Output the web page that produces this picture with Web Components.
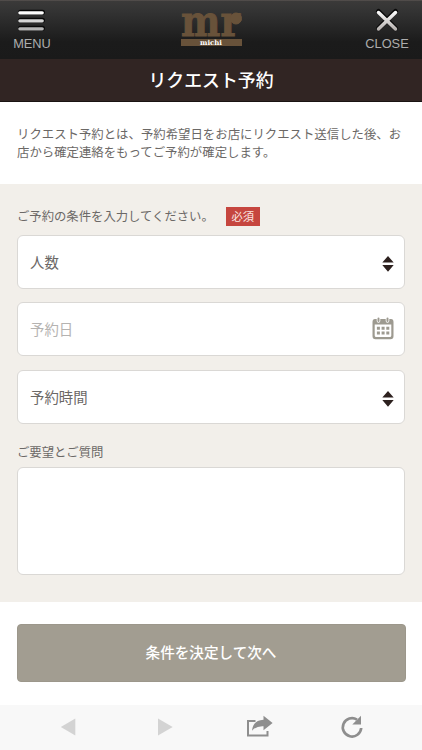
<!DOCTYPE html>
<html lang="ja">
<head>
<meta charset="utf-8">
<title>リクエスト予約</title>
<style>
body{margin:0;background:#fff;color:#6b6866;font-family:"Noto Sans CJK JP",sans-serif}
</style>
</head>
<body>
<reserve-page></reserve-page>
<script>
const define = (name, html) => customElements.define(name, class extends HTMLElement {
  constructor() {
    super();
    const t = document.createElement('template');
    t.innerHTML = html;
    this.attachShadow({mode: 'open'}).append(t.content.cloneNode(true));
  }
});

define('app-header', `
<style>
:host{display:flex;justify-content:space-between;height:59px;box-sizing:border-box;background:linear-gradient(#655d5a 0,#3b3a39 1px,#343434 10px,#1b1b1b 42px,#1a1a1a);color:#adadad;font:12.800px/16px "Liberation Sans",sans-serif}
.item{display:flex;flex-direction:column;align-items:center;width:64px;padding-top:7px}
.item:last-child{width:70px}
svg{display:block}
.item svg{margin-bottom:2px}
.logo{margin-left:6px}
</style>
<div class="item">
 <svg width="30" height="27" viewBox="0 0 30 27"><g stroke="#090909" stroke-width="5" stroke-linecap="round"><path d="M3.500 5.300H25.500M3.500 13.300H25.500M3.500 21.300H25.500"/></g><g stroke-width="3.300" stroke-linecap="round"><path stroke="#fff" d="M2.900 5.800H25.200"/><path stroke="#d5d5d5" d="M2.900 13.800H25.200"/><path stroke="#b4b4b4" d="M2.900 21.800H25.200"/></g></svg>
 <span>MENU</span>
</div>
<svg class="logo" width="70" height="59" viewBox="176 0 70 59">
 <g fill="#68523a" stroke="#68523a" font-family="DejaVu Serif" font-weight="700" font-size="42">
 <text x="181" y="36.300" stroke-width="1" textLength="59" lengthAdjust="spacingAndGlyphs">mr</text>
 <circle cx="236" cy="18.500" r="5.500"/></g>
 <rect x="181" y="39" width="61" height="7" fill="#68523a"/>
 <text x="200" y="45.200" textLength="22" lengthAdjust="spacingAndGlyphs" font-family="DejaVu Serif" font-weight="700" font-size="7" fill="#fff">michi</text>
</svg>
<div class="item">
 <svg width="28" height="27" viewBox="0 0 28 27"><defs><linearGradient id="g" gradientUnits="userSpaceOnUse" x1="0" y1="4" x2="0" y2="23"><stop stop-color="#fff"/><stop offset="1" stop-color="#b5b0ae"/></linearGradient></defs><path stroke="#090909" stroke-width="5" stroke-linecap="round" d="M5.500 4.500 22.500 21.500M22.500 4.500 5.500 21.500"/><path stroke="url(#g)" stroke-width="3.500" stroke-linecap="round" d="M5.500 5.500 22.500 22M22.500 5.500 5.500 22"/></svg>
 <span>CLOSE</span>
</div>`);

define('page-title', `
<style>:host{display:flex;height:43px;box-sizing:border-box;padding-bottom:2px;align-items:center;justify-content:center;background:#312523;border-bottom:1px solid #1a1312;color:#fff;font-size:17.900px;font-weight:500}</style><slot></slot>`);

define('intro-text', `
<style>:host{display:block;box-sizing:border-box;height:82px;padding:23px 17px 0;font-size:12.400px;line-height:18.300px;white-space:nowrap}</style><slot></slot>`);

define('required-badge', `
<style>:host{display:flex;align-items:center;justify-content:center;width:34px;height:19.500px;background:#c6463f;color:#fbe5e2;font-size:11.300px;line-height:1}</style><slot></slot>`);

define('form-label', `
<style>:host{display:flex;align-items:center;height:20px;font-size:12.350px;line-height:18px;gap:12px}</style><slot></slot>`);

define('form-field', `
<style>
:host{display:flex;box-sizing:border-box;height:54px;align-items:center;justify-content:space-between;padding:0 10px 0 12px;background:#fff;border:1px solid #dad8d5;border-radius:6px;font-size:14.400px;line-height:20px}
:host([muted]){color:#b5b3b1}
:host([area]){height:108px}
</style><slot></slot><slot name="icon"></slot>`);

define('sort-icon', `
<style>:host{display:block;margin-top:4px}svg{display:block}</style>
<svg width="12" height="16" viewBox="0 0 12 16" fill="#2d211f"><path d="M6 0 11.700 6.600H.3zM.3 9.100H11.700L6 15.700z"/></svg>`);

define('calendar-icon', `
<style>:host{display:block;margin-top:-1px}svg{display:block}</style>
<svg width="22" height="23" viewBox="0 0 22 23"><path fill="#9d9a90" fill-rule="evenodd" d="M3 2H19Q21.500 2 21.500 5V19Q21.500 22.200 18.500 22.200H3.500Q.5 22.200 .5 19V5Q.5 2 3 2zM2.700 7.500V18.500Q2.700 20 4.200 20H17.800Q19.300 20 19.300 18.500V7.500z"/><path stroke="#fff" stroke-width="3.600" stroke-linecap="round" d="M6.500 1V4M15.500 1V4"/><path stroke="#9d9a90" stroke-width="2" stroke-linecap="round" d="M6.500 1.400V4M15.500 1.400V4"/><path stroke="#9d9a90" stroke-width="3" stroke-dasharray="3 1.700" d="M4.900 11.300H17.400M4.900 16H17.400"/></svg>`);

define('submit-button', `
<style>:host{display:block}button{display:block;width:389px;height:58px;padding:0 0 3px;background:#a29d91;border:1px solid #9c978b;border-radius:4px;color:#fff;font:500 14.600px/20px "Noto Sans CJK JP",sans-serif}</style><button><slot></slot></button>`);

define('browser-bar', `
<style>:host{display:grid;grid-template-columns:136px 60px 126px 60px;box-sizing:border-box;height:45px;background:#f8f8f8;align-items:center;justify-items:center}svg{display:block}</style>
<svg width="16" height="18" viewBox="0 0 16 18" style="margin-top:-2px"><path fill="#d3d3d3" d="M15.300.5V17.500L.8 9z"/></svg>
<svg width="16" height="18" viewBox="0 0 16 18" style="margin:-2px 0 0 -2px"><path fill="#d3d3d3" d="M1 .5V17.500L15.700 9z"/></svg>
<svg width="28" height="24" viewBox="0 0 28 24" style="margin:-1px 0 0 2px"><path fill="none" stroke="#8e8e8e" stroke-width="2" d="M9.500 6H2V20.500H21.500V16"/><path fill="#8e8e8e" d="M17.500.8 26.600 8 17.500 15.200V11.200Q10.500 10.700 6 15.700Q7 5.300 17.500 4.800z"/></svg>
<svg width="24" height="24" viewBox="0 0 24 24" style="margin-top:-1px"><path fill="none" stroke="#8e8e8e" stroke-width="2.700" d="M17 4.600A9.200 9.200 0 1 0 21.200 13"/><path fill="#8e8e8e" d="M21 .8V9.500H12.300z"/></svg>`);

define('reserve-page', `
<style>
:host{display:flex;flex-direction:column;width:422px;height:750px;overflow:hidden}
.form{display:flex;flex-direction:column;box-sizing:border-box;height:418px;padding:21.500px 17px 0;background:#f2efea}
.fields{display:flex;flex-direction:column;gap:13.500px;margin:9px 0 18px}
.area{margin-top:5px}
required-badge{margin-top:2px}
.action{display:flex;justify-content:center;box-sizing:border-box;height:103px;padding-top:22px}
</style>
<app-header></app-header>
<page-title>リクエスト予約</page-title>
<intro-text>リクエスト予約とは、予約希望日をお店にリクエスト送信した後、お<br>店から確定連絡をもってご予約が確定します。</intro-text>
<section class="form">
 <form-label><span>ご予約の条件を入力してください。</span><required-badge>必須</required-badge></form-label>
 <div class="fields">
  <form-field>人数<sort-icon slot="icon"></sort-icon></form-field>
  <form-field muted>予約日<calendar-icon slot="icon"></calendar-icon></form-field>
  <form-field>予約時間<sort-icon slot="icon"></sort-icon></form-field>
 </div>
 <form-label>ご要望とご質問</form-label>
 <form-field area class="area"></form-field>
</section>
<div class="action"><submit-button>条件を決定して次へ</submit-button></div>
<browser-bar></browser-bar>`);
</script>
</body>
</html>
